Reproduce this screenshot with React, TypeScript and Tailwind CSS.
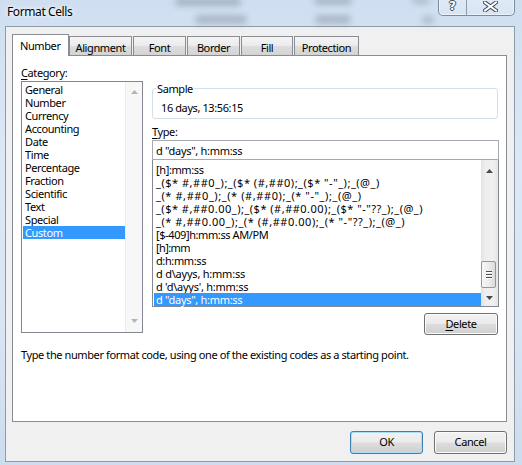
import React from "react";

const categories = [
  "General",
  "Number",
  "Currency",
  "Accounting",
  "Date",
  "Time",
  "Percentage",
  "Fraction",
  "Scientific",
  "Text",
  "Special",
  "Custom",
];

const formats: { code: string; cls: string }[] = [
  { code: "[h]:mm:ss", cls: "tracking-[-0.38px]" },
  { code: '_($* #,##0_);_($* (#,##0);_($* "-"_);_(@_)', cls: "tracking-[0.52px]" },
  { code: '_(* #,##0_);_(* (#,##0);_(* "-"_);_(@_)', cls: "tracking-[0.58px]" },
  { code: '_($* #,##0.00_);_($* (#,##0.00);_($* "-"??_);_(@_)', cls: "tracking-[0.49px]" },
  { code: '_(* #,##0.00_);_(* (#,##0.00);_(* "-"??_);_(@_)', cls: "tracking-[0.54px]" },
  { code: "[$-409]h:mm:ss AM/PM", cls: "tracking-[-0.4px]" },
  { code: "[h]:mm", cls: "tracking-[-0.6px]" },
  { code: "d:h:mm:ss", cls: "tracking-[-0.39px]" },
  { code: "d d\\ayys, h:mm:ss", cls: "tracking-[-0.22px]" },
  { code: "d 'd\\ayys', h:mm:ss", cls: "tracking-[-0.25px]" },
  { code: 'd "days", h:mm:ss', cls: "tracking-[-0.3px]" },
];

function Arrow({ dir, color }: { dir: "up" | "down"; color: string }) {
  return (
    <svg width="7" height="4" viewBox="0 0 7 4" className="block">
      {dir === "up" ? (
        <polygon points="3.5,0 7,4 0,4" fill={color} />
      ) : (
        <polygon points="0,0 7,0 3.5,4" fill={color} />
      )}
    </svg>
  );
}

function WinButton({
  children,
  primary,
  className,
}: {
  children: React.ReactNode;
  primary?: boolean;
  className: string;
}) {
  return (
    <div
      className={
        "flex items-center justify-center rounded-[3px] border bg-[linear-gradient(180deg,#f2f2f2_0%,#ebebeb_48%,#dddddd_52%,#cfcfcf_100%)] " +
        (primary
          ? "border-[#3c7fb1] shadow-[inset_0_0_0_1px_#a9def5] "
          : "border-[#707070] shadow-[inset_0_0_0_1px_#fbfbfb] ") +
        className
      }
    >
      {children}
    </div>
  );
}

const tabIdle =
  "flex h-[19px] items-center justify-center border border-b-0 border-[#898c95] bg-[linear-gradient(180deg,#f4f4f4_0%,#ebebeb_50%,#dddddd_52%,#d3d3d3_100%)] pt-[2px] leading-[15px]";

export default function App() {
  return (
    <div className="relative h-[465px] w-[522px] overflow-hidden bg-[linear-gradient(180deg,#cfdff1_0%,#dce8f5_35%,#d8e5f3_70%,#cddcee_100%)] font-['Noto_Sans',sans-serif] text-[11px] tracking-[-0.4px] text-black">
      {/* blurred sheet content seen through the glass frame */}
      <div className="pointer-events-none absolute left-[175px] top-[-2px] h-[8px] w-[66px] rounded-full bg-[#7b8696] opacity-50 blur-[3px]" />
      <div className="pointer-events-none absolute left-[195px] top-[15px] h-[9px] w-[52px] rounded-full bg-[#7b8696] opacity-45 blur-[3px]" />
      <div className="pointer-events-none absolute left-[314px] top-[-3px] h-[8px] w-[38px] rounded-full bg-[#7b8696] opacity-45 blur-[3px]" />
      <div className="pointer-events-none absolute left-[315px] top-[15px] h-[9px] w-[36px] rounded-full bg-[#7b8696] opacity-45 blur-[3px]" />
      <div className="pointer-events-none absolute left-[412px] top-[-3px] h-[7px] w-[18px] rounded-full bg-[#7b8696] opacity-40 blur-[3px]" />
      <div className="pointer-events-none absolute left-[422px] top-[16px] h-[8px] w-[12px] rounded-full bg-[#7b8696] opacity-40 blur-[3px]" />

      {/* title bar */}
      <div className="relative flex h-[26px] items-start">
        <span className="ml-[7px] mt-[4px] text-[12px] leading-[16px] [text-shadow:0_0_6px_#ffffff,0_0_3px_#ffffff]">
          Format Cells
        </span>
        <div className="ml-auto mr-[7px] mt-[-1px] flex h-[17px] overflow-hidden rounded-b-[5px] border border-t-0 border-[#7d8a9b] bg-[linear-gradient(180deg,rgba(255,255,255,0.35),rgba(255,255,255,0.15))] shadow-[inset_0_0_0_1px_rgba(255,255,255,0.5)]">
          <div className="flex w-[28px] items-center justify-center border-r border-[#8e9aab]">
            <span className="mt-[-2px] font-['DejaVu_Sans',sans-serif] text-[12px] font-bold leading-[14px] tracking-normal text-white [text-shadow:1px_0_0_#3d4653,-1px_0_0_#3d4653,0_1px_0_#3d4653,0_-1px_0_#3d4653]">
              ?
            </span>
          </div>
          <div className="flex w-[47px] items-center justify-center">
            <svg width="15" height="11" viewBox="0 0 15 11" className="mt-[-2px]">
              <path d="M2 1.5 L13 9.5 M13 1.5 L2 9.5" stroke="#3d4653" strokeWidth="4" strokeLinecap="square" />
              <path d="M2 1.5 L13 9.5 M13 1.5 L2 9.5" stroke="#ffffff" strokeWidth="2" strokeLinecap="square" />
            </svg>
          </div>
        </div>
      </div>

      {/* client area */}
      <div className="ml-[5px] flex h-[436px] w-[510px] flex-col border border-[#8f9aa8] bg-[#f0f0f0] pl-[6px] pr-[7px] pt-[7px]">
        {/* tab strip */}
        <div className="relative z-10 flex h-[21px] items-end">
          <div className="mb-[-1px] flex h-[22px] w-[57px] items-start border border-b-0 border-[#898c95] bg-white pl-[7px] pt-[3px] leading-[15px]">
            Number
          </div>
          <div className={tabIdle + " w-[63px]"}>Alignment</div>
          <div className={tabIdle + " ml-[1px] w-[53px]"}>Font</div>
          <div className={tabIdle + " ml-[1px] w-[53px]"}>Border</div>
          <div className={tabIdle + " ml-[1px] w-[52px]"}>Fill</div>
          <div className={tabIdle + " ml-[1px] w-[65px]"}>Protection</div>
        </div>

        {/* Number page */}
        <div className="flex h-[367px] w-[495px] flex-col border border-[#898c95] bg-white">
          <div className="flex">
            {/* category column */}
            <div className="ml-[8px] flex w-[122px] flex-col pt-[9px]">
              <div className="h-[15px] leading-[15px]">
                <span className="underline underline-offset-2">C</span>ategory:
              </div>
              <div className="mt-[1px] flex h-[252px] border border-[#828790] bg-white">
                <div className="flex flex-1 flex-col pl-[1px] pt-[1px]">
                  {categories.map((c) => (
                    <div
                      key={c}
                      className={
                        "h-[13px] whitespace-nowrap pl-[2px] leading-[13px] " +
                        (c === "Custom" ? "bg-[#3399ff] text-white" : "")
                      }
                    >
                      {c}
                    </div>
                  ))}
                </div>
                <div className="flex w-[17px] flex-col justify-between border-l border-[#ececec] bg-[#f7f7f7]">
                  <div className="flex h-[17px] items-center justify-center pt-[2px]">
                    <Arrow dir="up" color="#b4b4b4" />
                  </div>
                  <div className="flex h-[17px] items-center justify-center pb-[5px]">
                    <Arrow dir="down" color="#b4b4b4" />
                  </div>
                </div>
              </div>
            </div>

            {/* type column */}
            <div className="ml-[9px] flex w-[347px] flex-col pt-[25px]">
              <fieldset className="h-[38px] w-[346px] rounded-[3px] border border-[#d5dfe5] pl-[3px]">
                <legend className="px-[1px] leading-[15px]">Sample</legend>
                <div className="ml-[5px] mt-[4px] leading-[15px]">16 days, 13:56:15</div>
              </fieldset>
              <div className="mt-[5px] h-[15px] leading-[15px]">
                <span className="underline underline-offset-2">T</span>ype:
              </div>
              <div className="mt-[1px] flex h-[20px] items-center border border-[#a6abb3] bg-white pl-[3px] leading-[15px] tracking-[-0.3px]">
                d "days", h:mm:ss
              </div>
              <div className="flex h-[147px] border border-t-0 border-[#828790] bg-white">
                <div className="flex flex-1 flex-col pl-[1px] pt-[3px]">
                  {formats.map((f, i) => (
                    <div
                      key={i}
                      className={
                        "h-[13px] whitespace-pre pl-[2px] leading-[13px] " +
                        f.cls +
                        (i === formats.length - 1 ? " bg-[#3399ff] text-white" : "")
                      }
                    >
                      {f.code}
                    </div>
                  ))}
                </div>
                <div className="flex w-[17px] flex-col bg-[linear-gradient(90deg,#e2e2e2_0%,#eeeeee_25%,#f0f0f0_70%,#e6e6e6_100%)]">
                  <div className="flex h-[17px] items-center justify-center pt-[4px]">
                    <Arrow dir="up" color="#4a4a4a" />
                  </div>
                  <div className="flex flex-1 flex-col justify-end pb-[1px]">
                    <div className="flex h-[27px] w-[15px] flex-col items-center justify-center gap-[2px] rounded-[2px] border border-[#969696] bg-[linear-gradient(90deg,#f6f6f6_0%,#ececec_50%,#dadada_100%)]">
                      <div className="h-[1px] w-[6px] bg-[#4f4f4f] shadow-[0_1px_0_#ffffff]" />
                      <div className="h-[1px] w-[6px] bg-[#4f4f4f] shadow-[0_1px_0_#ffffff]" />
                      <div className="h-[1px] w-[6px] bg-[#4f4f4f] shadow-[0_1px_0_#ffffff]" />
                    </div>
                  </div>
                  <div className="flex h-[17px] items-center justify-center">
                    <Arrow dir="down" color="#4a4a4a" />
                  </div>
                </div>
              </div>
              <div className="mt-[6px] flex justify-end pr-[1px]">
                <WinButton className="h-[22px] w-[74px]">
                  <span>
                    <span className="underline underline-offset-2">D</span>elete
                  </span>
                </WinButton>
              </div>
            </div>
          </div>
          <div className="ml-[8px] mt-[12px] h-[15px] leading-[15px]">
            Type the number format code, using one of the existing codes as a starting point.
          </div>
        </div>

        {/* dialog buttons */}
        <div className="mt-[9px] flex justify-end gap-[11px]">
          <WinButton primary className="h-[23px] w-[73px]">
            OK
          </WinButton>
          <WinButton className="h-[23px] w-[73px]">Cancel</WinButton>
        </div>
      </div>
    </div>
  );
}
